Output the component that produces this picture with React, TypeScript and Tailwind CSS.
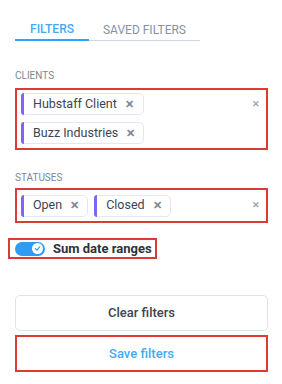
import { useState } from "react";

const RED = "border-[#dc3a34]";

function Chip({ label }: { label: string }) {
  return (
    <div className="flex h-[22px] items-center rounded-[5px] border border-[#e3e7ef] bg-white pr-[8px]">
      <span className="h-[22px] w-[3px] -ml-px rounded-l-[5px] bg-[#7b68ee]" />
      <span className="pl-[9px] text-[12.5px] leading-none text-[#3c4452]">{label}</span>
      <span className="ml-[8px] text-[11px] font-bold leading-none text-[#7d8591]">✕</span>
    </div>
  );
}

function ClearX() {
  return <span className="text-[9px] font-bold leading-none text-[#a0a6af]">✕</span>;
}

export default function App() {
  const [tab, setTab] = useState(0);
  const [sum, setSum] = useState(true);

  return (
    <div className="h-[384px] w-[282px] bg-white pl-[15px] pr-[14px] pt-[18px] font-['Roboto',sans-serif]">
      {/* Tabs */}
      <div className="flex w-[185px] border-b border-[#c9d6e6]">
        {["FILTERS", "SAVED FILTERS"].map((t, i) => (
          <button
            key={t}
            onClick={() => setTab(i)}
            className={
              "-mb-px h-[23px] text-[12px] leading-none " +
              (i === 0 ? "w-[74px] " : "w-[111px] ") +
              (tab === i ? "border-b-2 border-[#2ea6f7] font-medium text-[#45aaf2]" : "text-[#8792a2]")
            }
          >
            {t}
          </button>
        ))}
      </div>

      {/* Clients */}
      <div className="mt-[30px] text-[10px] leading-none text-[#7d8797]">CLIENTS</div>
      <div className={"mt-[7px] flex h-[62px] items-start justify-between border-2 " + RED + " pl-[4px] pr-[6px] pt-[3px]"}>
        <div className="flex flex-col gap-[7px]">
          <Chip label="Hubstaff Client" />
          <Chip label="Buzz Industries" />
        </div>
        <div className="flex h-[22px] items-center">
          <ClearX />
        </div>
      </div>

      {/* Statuses */}
      <div className="mt-[23px] text-[10px] leading-none text-[#7d8797]">STATUSES</div>
      <div className={"mt-[5px] flex h-[35px] items-center justify-between border-2 " + RED + " pl-[4px] pr-[6px]"}>
        <div className="flex gap-[6px]">
          <Chip label="Open" />
          <Chip label="Closed" />
        </div>
        <ClearX />
      </div>

      {/* Sum toggle */}
      <div className={"-ml-[7px] mt-[15px] inline-flex h-[21px] items-center gap-[8px] border-2 " + RED + " pl-[5px] pr-[3px]"}>
        <button
          onClick={() => setSum(!sum)}
          className={"flex h-[14px] w-[30px] items-center rounded-full px-[2px] " + (sum ? "justify-end bg-[#2f9bf2]" : "justify-start bg-[#c3cad4]")}
        >
          <span className="flex h-[11px] w-[11px] items-center justify-center rounded-full bg-white">
            {sum && (
              <svg width="7" height="7" viewBox="0 0 8 8">
                <path d="M1.5 4.2 3.3 5.9 6.6 2.2" fill="none" stroke="#2f9bf2" strokeWidth="1.4" strokeLinecap="round" strokeLinejoin="round" />
              </svg>
            )}
          </span>
        </button>
        <span className="text-[13px] font-bold leading-none text-[#2d333c]">Sum date ranges</span>
      </div>

      {/* Buttons */}
      <button className="mt-[36px] flex h-[36px] w-full items-center justify-center rounded-[5px] border border-[#dfe3ea] text-[13px] font-medium text-[#3c4452]">
        Clear filters
      </button>
      <button className={"mt-[4px] flex h-[37px] w-full items-center justify-center border-2 " + RED + " text-[13px] font-medium text-[#45aaf2]"}>
        Save filters
      </button>
    </div>
  );
}
